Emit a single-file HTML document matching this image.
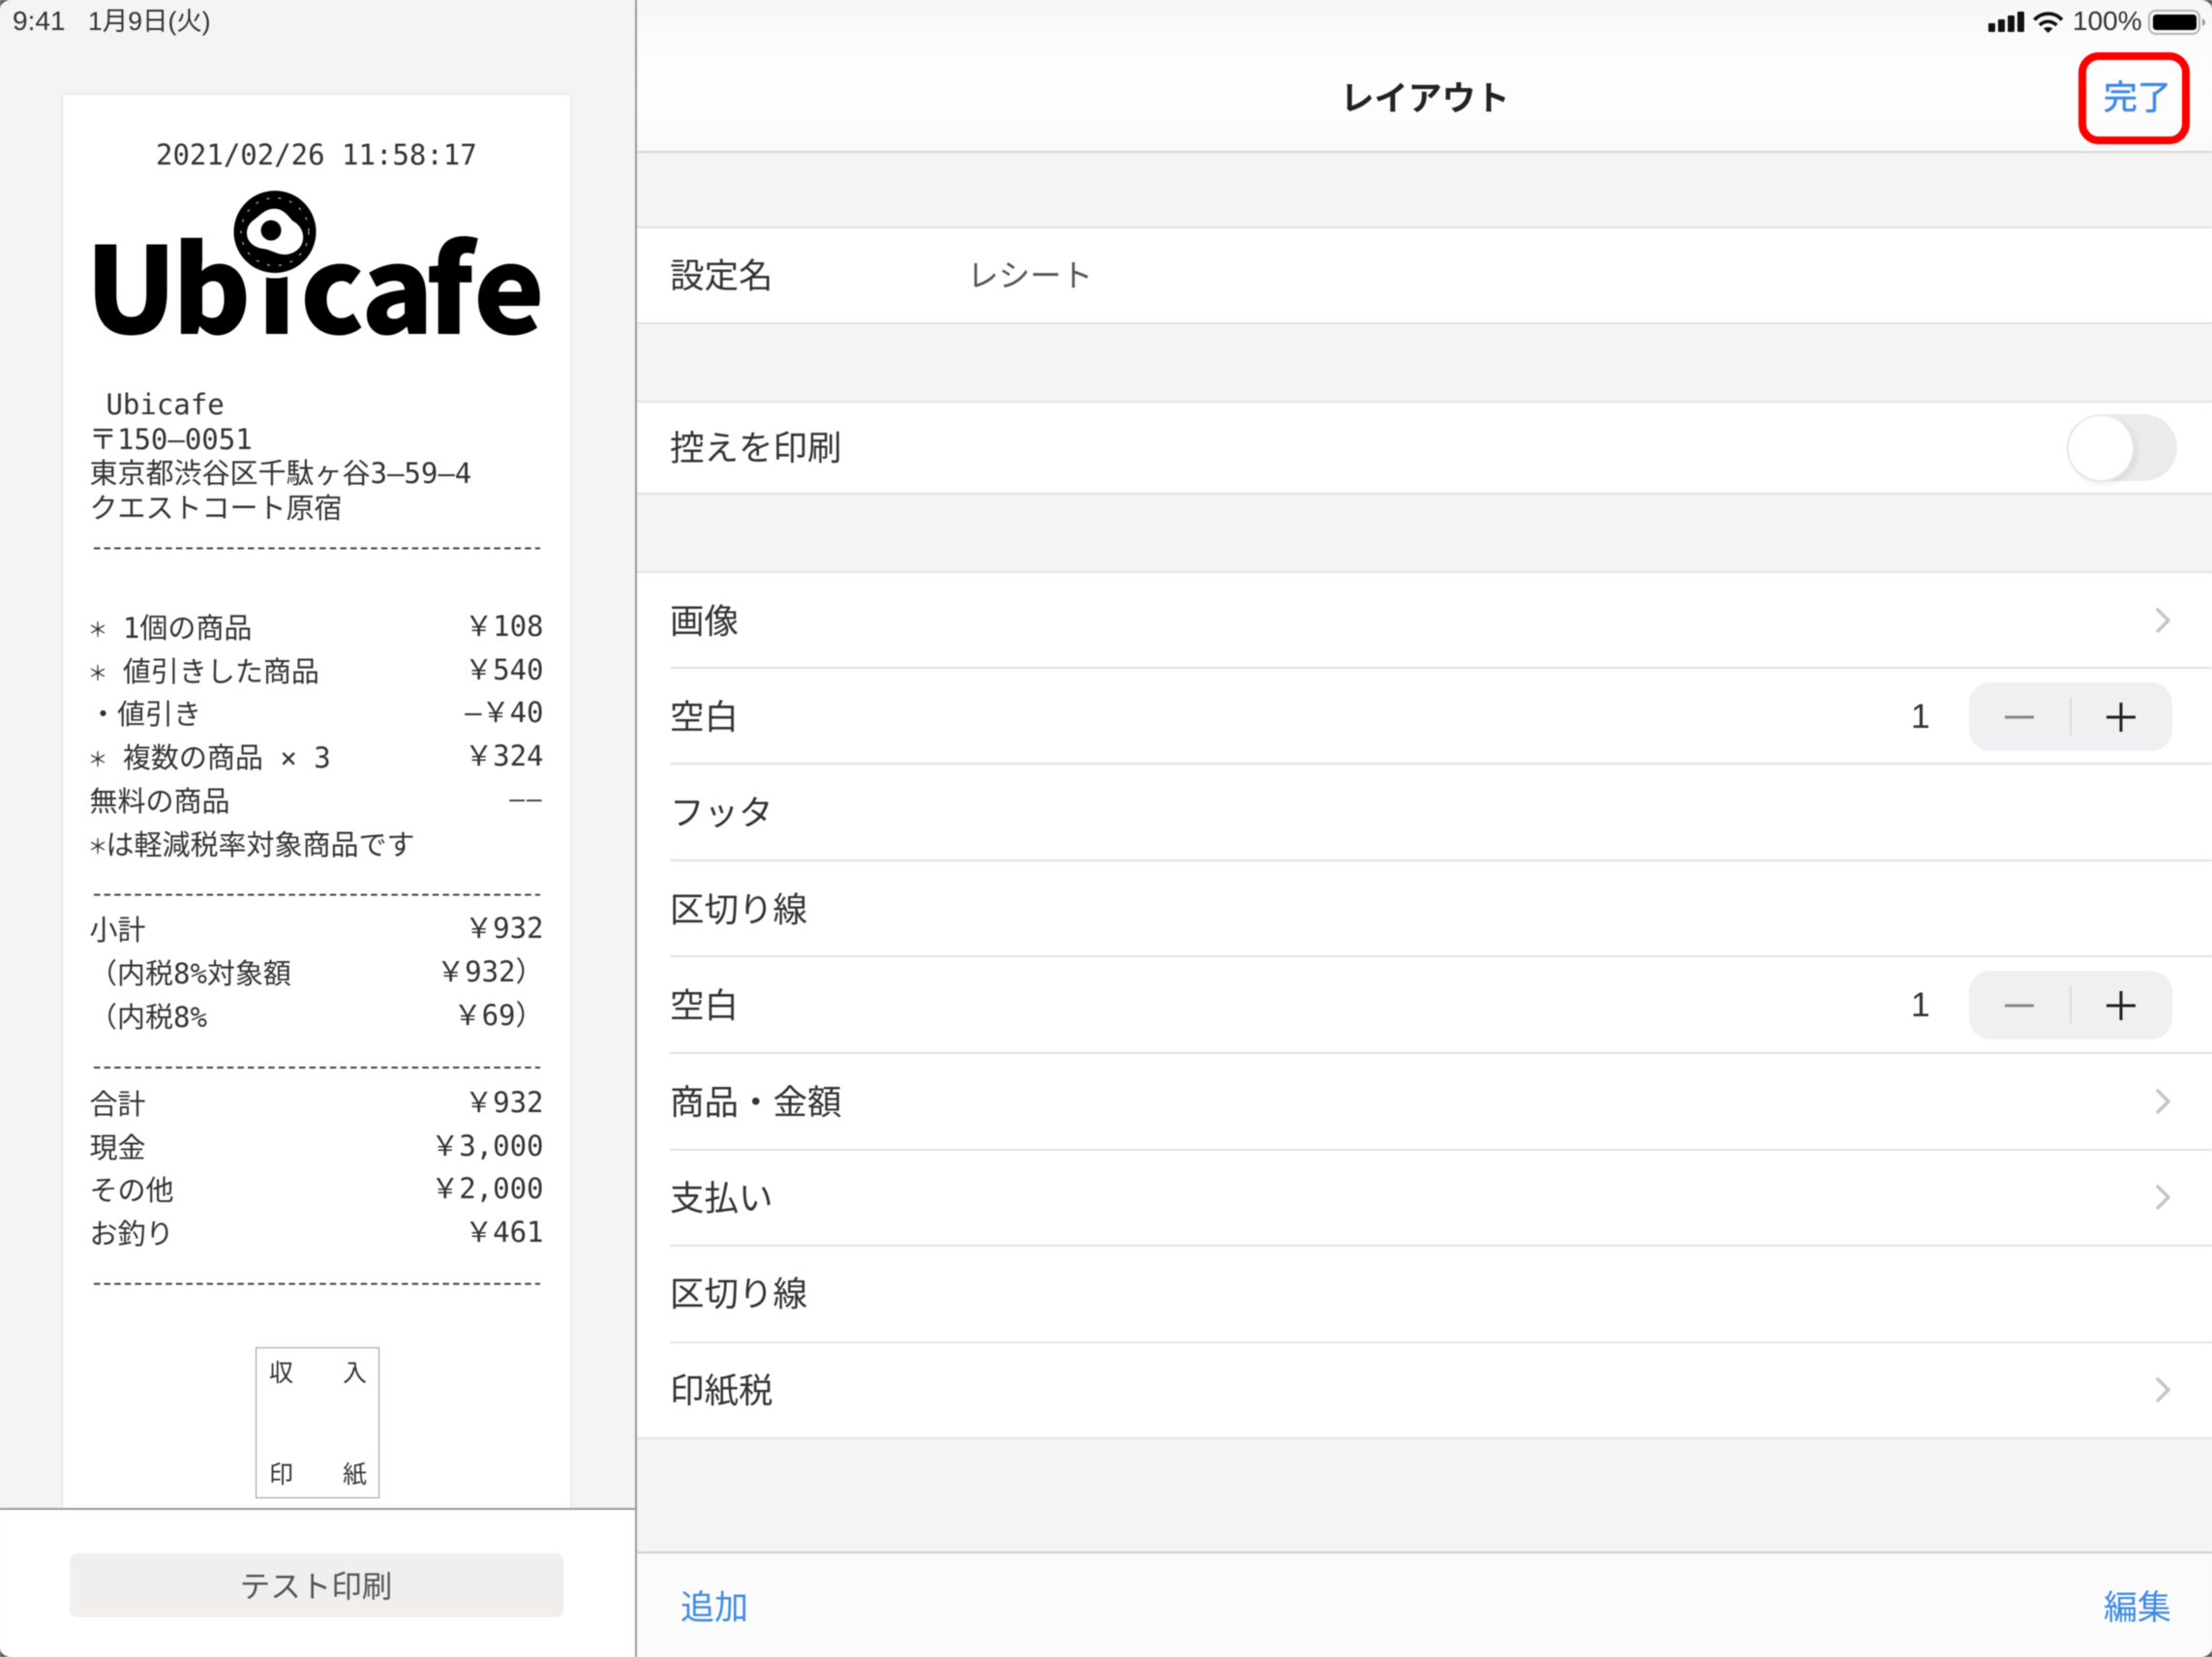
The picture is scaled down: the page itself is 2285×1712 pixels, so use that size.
<!DOCTYPE html>
<html lang="ja"><head><meta charset="utf-8"><title>レイアウト</title>
<style>
html,body{margin:0;padding:0}
body{width:2285px;height:1712px;position:relative;overflow:hidden;background:#f4f4f4;font-family:"Liberation Sans","Noto Sans CJK JP",sans-serif;color:#333}
#p{position:absolute;left:0;top:0;width:2285px;height:1712px;filter:blur(.45px)}
.b{position:absolute}
.m{position:absolute;font-family:"DejaVu Sans Mono","Noto Sans CJK JP",monospace;font-size:29px;line-height:40px;white-space:pre;color:#333}
.m i{font-style:normal;display:inline-block;width:17.45px;font-family:"Noto Sans CJK JP",sans-serif;font-size:21px;line-height:0;vertical-align:1px;text-indent:-1.5px}
.a{text-align:right;right:1723.5px}
.r{position:absolute;left:692px;font-size:35.5px;line-height:50px;white-space:pre;color:#333;font-family:"Liberation Sans","Noto Sans CJK JP",sans-serif}
.l{position:absolute;left:658px;right:0;height:2px;background:#e2e2e2}
.n{left:692px}
.w{position:absolute;left:658px;right:0;background:#fff}
.s{position:absolute;font-size:35px;line-height:50px;color:#3f8ae6;white-space:pre}
svg{position:absolute;left:0;top:0}
</style></head><body><div id="p">
<div class="b" style="left:0;top:0;width:656px;height:1558px;background:#f4f4f4"></div>
<div class="b" style="left:65px;top:98px;width:524px;height:1460px;background:#fff;box-shadow:0 0 3px rgba(0,0,0,.16)"></div>
<div class="b" style="left:0;top:1558px;width:656px;height:2px;background:#999"></div>
<div class="b" style="left:0;top:1560px;width:656px;height:152px;background:#fff"></div>
<div class="b" style="left:72px;top:1605px;width:510px;height:66px;background:#f0efed;border-radius:8px"></div>
<div class="b" style="left:656px;top:0;width:2px;height:1712px;background:#999"></div>

<div class="b" style="left:658px;top:0;right:0;height:156px;background:linear-gradient(#f6f6f6,#fbfbfb 22%,#fefefe 50%,#fdfdfd 80%,#fafafa)"></div>
<div class="l" style="top:156px;background:#d8d8d8"></div>
<div class="w" style="top:236px;height:97px"></div>
<div class="l" style="top:234px"></div><div class="l" style="top:333px"></div>
<div class="w" style="top:416px;height:93px"></div>
<div class="l" style="top:414px"></div><div class="l" style="top:509px"></div>
<div class="w" style="top:592px;height:894px"></div>
<div class="l" style="top:590px"></div>
<div class="l n" style="top:689px"></div><div class="l n" style="top:788px"></div><div class="l n" style="top:888px"></div><div class="l n" style="top:987px"></div><div class="l n" style="top:1087px"></div><div class="l n" style="top:1187px"></div><div class="l n" style="top:1286px"></div><div class="l n" style="top:1386px"></div><div class="l" style="top:1485px"></div>
<div class="b" style="left:658px;top:1604px;right:0;height:108px;background:#fbfbfb"></div>
<div class="l" style="top:1603px;background:#cfcfcf"></div>

<!-- status bar -->
<div class="b" style="left:13px;top:2px;font-size:28px;line-height:40px;white-space:pre;color:#333">9:41</div>
<div class="b" style="left:91px;top:2px;font-size:26.5px;line-height:40px;white-space:pre;color:#333">1月9日(火)</div>
<div class="b" style="left:2141px;top:2px;font-size:28px;line-height:40px;white-space:pre;color:#333">100%</div>

<!-- receipt -->
<div class="m" style="left:161px;top:139.500px">2021/02/26 11:58:17</div>
<div class="m" style="left:92px;top:398px"> Ubicafe</div>
<div class="m" style="left:92px;top:433.500px">〒150–0051</div>
<div class="m" style="left:92.500px;top:469px">東京都渋谷区千駄ヶ谷3–59–4</div>
<div class="m" style="left:92.500px;top:505px">クエストコート原宿</div>

<div class="m" style="left:92px;top:628.500px"><i>＊</i> 1個の商品</div><div class="m a" style="top:626.500px">￥108</div>
<div class="m" style="left:92px;top:673.500px"><i>＊</i> 値引きした商品</div><div class="m a" style="top:671.500px">￥540</div>
<div class="m" style="left:92px;top:717.500px">・値引き</div><div class="m a" style="top:716px">–￥40</div>
<div class="m" style="left:92px;top:763px"><i>＊</i> 複数の商品 × 3</div><div class="m a" style="top:761px">￥324</div>
<div class="m" style="left:92.500px;top:807.500px">無料の商品</div><div class="m a" style="top:805.500px;font-size:26px;letter-spacing:2px">––</div>
<div class="m" style="left:92px;top:852.500px"><i>＊</i>は軽減税率対象商品です</div>

<div class="m" style="left:92.500px;top:941px">小計</div><div class="m a" style="top:939px">￥932</div>
<div class="m" style="left:92px;top:986px">（内税8%対象額</div><div class="m a" style="top:984px">￥932）</div>
<div class="m" style="left:92px;top:1031px">（内税8%</div><div class="m a" style="top:1029px">￥69）</div>

<div class="m" style="left:92.500px;top:1121px">合計</div><div class="m a" style="top:1119px">￥932</div>
<div class="m" style="left:92.500px;top:1165.500px">現金</div><div class="m a" style="top:1163.500px">￥3,000</div>
<div class="m" style="left:92.500px;top:1210px">その他</div><div class="m a" style="top:1208px">￥2,000</div>
<div class="m" style="left:92.500px;top:1254.500px">お釣り</div><div class="m a" style="top:1252.500px">￥461</div>

<div class="b" style="left:264px;top:1392px;width:126px;height:154px;border:1px solid #999;background:#fff"></div>
<div class="m" style="left:278px;top:1399px;font-size:25px">収</div>
<div class="m" style="left:354px;top:1399px;font-size:25px">入</div>
<div class="m" style="left:278px;top:1504px;font-size:25px">印</div>
<div class="m" style="left:354px;top:1504px;font-size:25px">紙</div>

<div class="b" style="left:71.500px;top:1614px;width:510px;text-align:center;font-size:31.500px;line-height:50px;color:#555">テスト印刷</div>

<!-- right pane text -->
<div class="b" style="left:1272px;width:400px;top:78px;text-align:center;font-size:35px;line-height:50px;font-weight:700;color:#222">レイアウト</div>
<div class="s" style="left:2173px;top:77px;-webkit-text-stroke:.6px #3f8ae6">完了</div>
<div class="r" style="top:259.500px">設定名</div>
<div class="r" style="top:260px;left:999px;color:#555;font-size:32.500px">レシート</div>
<div class="r" style="top:438px">控えを印刷</div>
<div class="r" style="top:617px">画像</div>
<div class="r" style="top:716px">空白</div>
<div class="r" style="top:815px">フッタ</div>
<div class="r" style="top:915px">区切り線</div>
<div class="r" style="top:1014px">空白</div>
<div class="r" style="top:1114px">商品・金額</div>
<div class="r" style="top:1213px">支払い</div>
<div class="r" style="top:1312px">区切り線</div>
<div class="r" style="top:1412px">印紙税</div>
<div class="r" style="left:1974px;top:715px">1</div>
<div class="r" style="left:1974px;top:1013px">1</div>
<div class="s" style="left:703px;top:1636.500px">追加</div>
<div class="s" style="left:2173px;top:1636.500px">編集</div>

<!-- toggle / steppers -->
<div class="b" style="left:2135px;top:428px;width:114px;height:69px;border-radius:35px;background:#ebebeb"></div>
<div class="b" style="left:2135px;top:428px;width:66px;height:66px;border-radius:50%;background:#fff;border:2px solid #e6e6e6;border-top-color:#ececec;box-shadow:3px 3px 6px rgba(0,0,0,.07)"></div>
<div class="b" style="left:2034px;top:705px;width:210px;height:71px;border-radius:22px;background:#f0f0f2"></div>
<div class="b" style="left:2034px;top:1003px;width:210px;height:71px;border-radius:22px;background:#f0f0f2"></div>

<svg width="2285" height="1712" viewBox="0 0 2285 1712" fill="none">
 <!-- logo -->
 <text y="345" font-family="'Noto Sans CJK JP',sans-serif" font-size="124" font-weight="900" fill="#000" x="88 178 266 310 373 440 489">Ubicafe</text>
 <circle cx="284" cy="239.500" r="48" fill="#fff"/>
 <circle cx="284" cy="239.500" r="42.500" fill="#000"/>
 <circle cx="284" cy="239.500" r="35" stroke="#fff" stroke-width="1.300" stroke-dasharray="3 9" opacity=".65"/>
 <path d="M280 216C291 214 297 222 302 228C310 232 314 240 313 247C312 257 303 263 294 263C286 263 280 258 272 257C263 256 255 250 255 241C255 232 261 228 265 225C270 221 274 217 280 216Z" fill="#fff"/>
 <circle cx="280" cy="238" r="10.500" fill="#000"/>
 <!-- dashed separators -->
 <path d="M97 566.500H558M97 924.500H558M97 1103H558M97 1326.500H558" stroke="#444" stroke-width="2" stroke-dasharray="6.500 4.100"/>
 <!-- signal -->
 <g fill="#111"><rect x="2054" y="24" width="7" height="9" rx="1"/><rect x="2064" y="20" width="7" height="13" rx="1"/><rect x="2074" y="16" width="7" height="17" rx="1"/><rect x="2084" y="12" width="7" height="21" rx="1"/></g>
 <!-- wifi -->
 <g stroke="#111" stroke-width="3.600"><path d="M2101.500 20.500C2109.500 12 2122.500 12 2130 20.500"/><path d="M2107 26C2112 21 2119 21 2124.500 26"/></g>
 <path d="M2111 29.500C2113.500 27.500 2117.500 27.500 2120.500 29.500L2115.700 34Z" fill="#111"/>
 <!-- battery -->
 <rect x="2220" y="11" width="52" height="24" rx="7" stroke="#b4b4b4" stroke-width="2"/>
 <rect x="2224" y="15" width="45" height="16" rx="3.500" fill="#000"/>
 <path d="M2275 19C2277 20 2278 22 2278 23C2278 25 2277 26 2275 27Z" fill="#999"/>
 <!-- red box -->
 <rect x="2151" y="58" width="107" height="87" rx="17" stroke="#ff0000" stroke-width="8"/>
 <!-- stepper glyphs -->
 <path d="M2071 741H2101" stroke="#888" stroke-width="3"/><path d="M2139 721V760" stroke="#dcdcdc" stroke-width="2"/>
 <path d="M2176 741H2206M2191 726V756" stroke="#222" stroke-width="3"/>
 <path d="M2071 1039H2101" stroke="#888" stroke-width="3"/><path d="M2139 1019V1058" stroke="#dcdcdc" stroke-width="2"/>
 <path d="M2176 1039H2206M2191 1024V1054" stroke="#222" stroke-width="3"/>
 <!-- chevrons -->
 <g stroke="#c6c6c8" stroke-width="3.500" stroke-linecap="round" stroke-linejoin="round">
 <path d="M2229 630L2240 641L2229 652"/><path d="M2229 1127L2240 1138L2229 1149"/><path d="M2229 1226L2240 1237L2229 1248"/><path d="M2229 1425L2240 1436L2229 1447"/>
 </g>
 <!-- device corners -->
 <path d="M0 0H10Q0 2 0 10Z" fill="#555"/><path d="M2285 0H2275Q2285 2 2285 10Z" fill="#555"/><path d="M0 1712H10Q0 1710 0 1702Z" fill="#555"/><path d="M2285 1712H2275Q2285 1710 2285 1702Z" fill="#555"/>
</svg>
</div></body></html>
